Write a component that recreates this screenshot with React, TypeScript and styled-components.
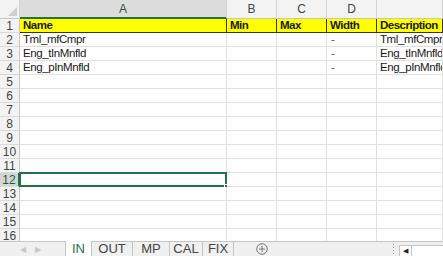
import styled, { createGlobalStyle } from "styled-components";

const Global = createGlobalStyle`
  html, body { margin: 0; padding: 0; background: #fff; overflow: hidden; }
  body { font-family: "Liberation Sans", Arial, sans-serif; }
`;

const Window = styled.div`
  width: 443px;
  height: 256px;
  display: flex;
  flex-direction: column;
  overflow: hidden;
`;

const Sheet = styled.div`
  height: 241px;
  overflow: hidden;
  display: grid;
  grid-template-columns: 20px 207px 50px 50px 50px 1fr;
  grid-auto-rows: 14px;
  grid-template-rows: 19px;
`;

const Corner = styled.div`
  background: #f3f3f3;
  border-right: 1px solid #d4d4d4;
  border-bottom: 1px solid #c6c6c6;
  position: relative;
  &::after {
    content: "";
    position: absolute;
    right: 2px;
    bottom: 2px;
    border-style: solid;
    border-width: 0 0 9px 9px;
    border-color: transparent transparent #d0d0d0 transparent;
  }
`;

const ColHead = styled.div<{ $sel?: boolean }>`
  display: flex;
  align-items: center;
  justify-content: center;
  font-size: 12px;
  color: ${({ $sel }) => ($sel ? "#1e5e36" : "#444")};
  background: ${({ $sel }) => ($sel ? "#dcdcdc" : "#f3f3f3")};
  border-right: 1px solid #d4d4d4;
  border-bottom: ${({ $sel }) => ($sel ? "2px solid #217346" : "1px solid #c6c6c6")};
`;

const RowHead = styled.div<{ $sel?: boolean }>`
  display: flex;
  align-items: center;
  justify-content: center;
  font-size: 12px;
  color: ${({ $sel }) => ($sel ? "#1e5e36" : "#444")};
  background: ${({ $sel }) => ($sel ? "#d5d5d5" : "#f3f3f3")};
  border-right: ${({ $sel }) => ($sel ? "2px solid #217346" : "1px solid #c6c6c6")};
  border-bottom: 1px solid #dadada;
`;

const Cell = styled.div<{ $hdr?: boolean; $sel?: boolean }>`
  position: relative;
  box-sizing: border-box;
  font-size: 11.5px;
  line-height: 13px;
  padding: 0 1px 0 3px;
  white-space: nowrap;
  overflow: hidden;
  color: #1a1a1a;
  font-weight: ${({ $hdr }) => ($hdr ? 700 : 400)};
  letter-spacing: ${({ $hdr }) => ($hdr ? "-0.5px" : "-0.4px")};
  background: ${({ $hdr }) => ($hdr ? "#ffff00" : "#fff")};
  border-right: 1px solid ${({ $hdr }) => ($hdr ? "#3a3a00" : "#e1e1e1")};
  border-bottom: 1px solid ${({ $hdr }) => ($hdr ? "#3a3a00" : "#e1e1e1")};
  ${({ $sel }) =>
    $sel &&
    `
    overflow: visible;
    &::before {
      content: "";
      position: absolute;
      left: -1px; top: -1px; right: -1px; bottom: -1px;
      border: 2px solid #217346;
    }
    &::after {
      content: "";
      position: absolute;
      right: -3px; bottom: -3px;
      width: 5px; height: 5px;
      background: #217346;
      border: 1px solid #fff;
      box-sizing: border-box;
    }
  `}
`;

const Dash = styled.span`
  padding-left: 1px;
  color: #555;
`;

const TabBar = styled.div`
  flex: 1;
  display: flex;
  align-items: stretch;
  background: #f0f0f0;
  border-top: 1px solid #c6c6c6;
`;

const Nav = styled.div`
  width: 65px;
  display: flex;
  align-items: center;
  gap: 9px;
  padding-left: 20px;
  box-sizing: border-box;
  font-size: 8px;
  color: #c8c8c8;
`;

const Tab = styled.div<{ $active?: boolean; $w: number }>`
  width: ${({ $w }) => $w}px;
  box-sizing: border-box;
  display: flex;
  align-items: center;
  justify-content: center;
  margin-top: -1px;
  font-size: 13px;
  color: ${({ $active }) => ($active ? "#217346" : "#444")};
  background: ${({ $active }) => ($active ? "#fff" : "transparent")};
  border-right: 1px solid #c4c4c4;
  border-left: ${({ $active }) => ($active ? "1px solid #c4c4c4" : "none")};
`;

const AddBtn = styled.div`
  width: 56px;
  display: flex;
  align-items: center;
  justify-content: center;
`;

const Spacer = styled.div`
  flex: 1;
`;

const Grip = styled.div`
  width: 11px;
  display: flex;
  align-items: center;
  justify-content: center;
`;

const Scroll = styled.div`
  width: 43px;
  margin-top: 3px;
  display: flex;
  background: #fff;
  border: 1px solid #c6c6c6;
  border-bottom: none;
  border-right: none;
`;

const ScrollArrow = styled.div`
  width: 11px;
  display: flex;
  align-items: center;
  justify-content: center;
  border-right: 1px solid #c6c6c6;
  font-size: 7px;
  color: #222;
`;

const cols = ["A", "B", "C", "D", ""];
const header = ["Name", "Min", "Max", "Width", "Description"];
const data = [
  ["Tml_mfCmpr", "", "", "-", "Tml_mfCmpr input"],
  ["Eng_tInMnfld", "", "", "-", "Eng_tInMnfld"],
  ["Eng_pInMnfld", "", "", "-", "Eng_pInMnfld"],
];
const tabs = [
  { name: "IN", w: 27 },
  { name: "OUT", w: 41 },
  { name: "MP", w: 37 },
  { name: "CAL", w: 33 },
  { name: "FIX", w: 31 },
];

export default function App() {
  const rows: string[][] = [header, ...data];
  for (let i = rows.length; i < 16; i++) rows.push(["", "", "", "", ""]);

  return (
    <Window>
      <Global />
      <Sheet>
        <Corner />
        {cols.map((c, i) => (
          <ColHead key={i} $sel={i === 0}>
            {c}
          </ColHead>
        ))}
        {rows.map((r, ri) => [
          <RowHead key={`h${ri}`} $sel={ri === 11}>
            {ri + 1}
          </RowHead>,
          ...r.map((v, ci) => (
            <Cell key={`${ri}-${ci}`} $hdr={ri === 0} $sel={ri === 11 && ci === 0}>
              {ci === 3 && v === "-" ? <Dash>-</Dash> : v}
            </Cell>
          )),
        ])}
      </Sheet>
      <TabBar>
        <Nav>
          <span>◀</span>
          <span>▶</span>
        </Nav>
        {tabs.map((t, i) => (
          <Tab key={t.name} $w={t.w} $active={i === 0}>
            {t.name}
          </Tab>
        ))}
        <AddBtn>
          <svg width="12" height="12" viewBox="0 0 12 12">
            <circle cx="6" cy="6" r="5.3" fill="none" stroke="#777" strokeWidth="1" />
            <path d="M6 3v6M3 6h6" stroke="#777" strokeWidth="1" />
          </svg>
        </AddBtn>
        <Spacer />
        <Grip>
          <svg width="3" height="12" viewBox="0 0 3 12">
            <rect x="1" y="1" width="1" height="1" fill="#999" />
            <rect x="1" y="4" width="1" height="1" fill="#999" />
            <rect x="1" y="7" width="1" height="1" fill="#999" />
            <rect x="1" y="10" width="1" height="1" fill="#999" />
          </svg>
        </Grip>
        <Scroll>
          <ScrollArrow>◀</ScrollArrow>
        </Scroll>
      </TabBar>
    </Window>
  );
}
